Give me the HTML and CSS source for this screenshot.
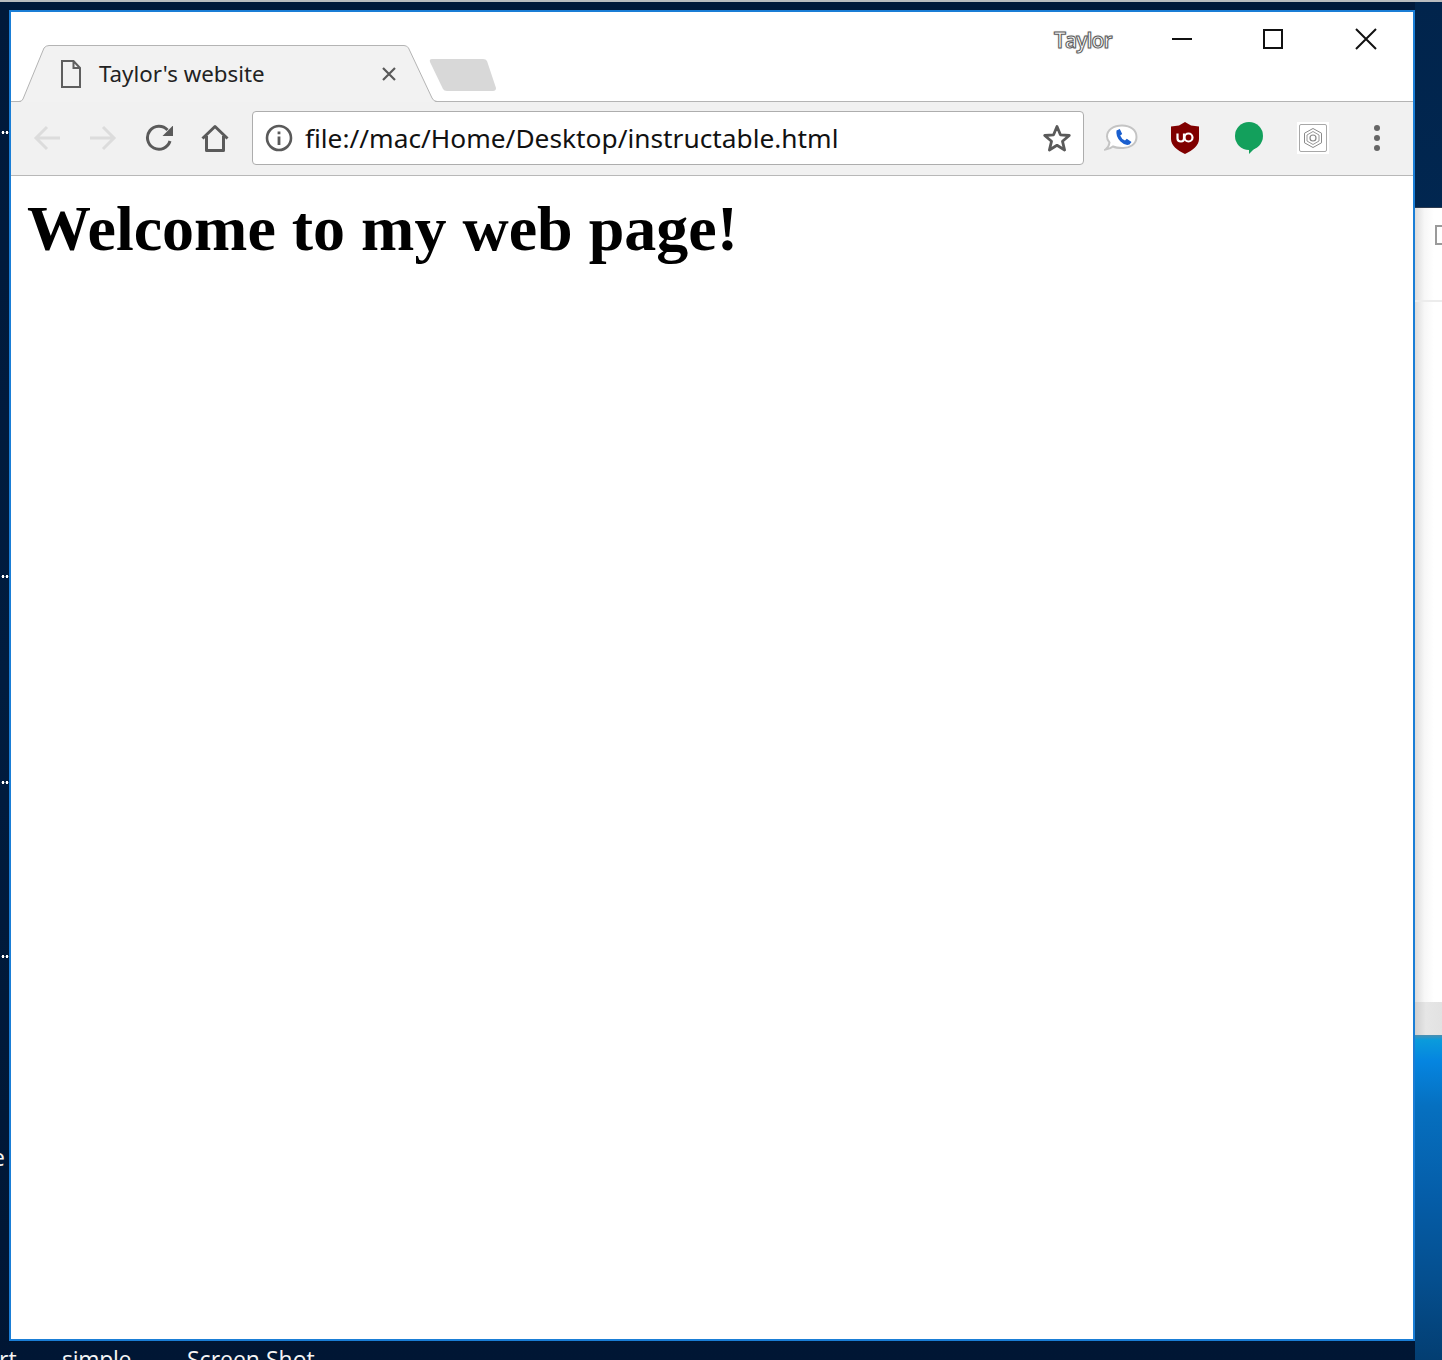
FILE: index.html
```html
<!DOCTYPE html>
<html lang="en">
<head>
<meta charset="utf-8">
<title>Taylor's website</title>
<link rel="stylesheet" href="styles.css">
</head>
<body>
<div class="desktop">
  <div class="strip"></div>
  <div class="backdrop-right">
    <div class="bg-window">
      <div class="bg-head"><span class="bg-box"></span></div>
      <div class="bg-body"></div>
      <div class="bg-foot"></div>
    </div>
    <div class="bg-wall"></div>
  </div>
  <span class="dots d1"></span>
  <span class="dots d2"></span>
  <span class="dots d3"></span>
  <span class="dots d4"></span>
  <span class="desk-label l0">e</span>
  <span class="desk-label l1">rt</span>
  <span class="desk-label l2">simple</span>
  <span class="desk-label l3">Screen Shot</span>

  <div class="window">
    <div class="titlebar">
      <svg class="tab-shape" width="500" height="90" viewBox="0 0 500 90">
        <path d="M10 89H424V90H10Z" fill="#f2f2f2"/>
        <path d="M0 89.500H8Q11 89.500 12 87L33 36Q35 33.500 38 33.500H393Q396 33.500 397.500 36L421 86Q422.500 89.500 426 89.500H430" fill="#f2f2f2" stroke="#b4b4b4" stroke-width="1"/>
        <path d="M421 47H472Q475 47 476 49L485 76Q485 79 482 79H436Q433 79 432 77L419 50Q418 47 421 47Z" fill="#d8d8d8"/>
      </svg>
      <svg class="tab-file" width="20" height="28" viewBox="0 0 20 28">
        <path d="M1 1H12.500L19 8V27H1Z M12.500 1V8H19" fill="none" stroke="#5f5f5f" stroke-width="2"/>
      </svg>
      <span class="tab-title">Taylor's website</span>
      <svg class="tab-close" width="16" height="16" viewBox="0 0 16 16">
        <path d="M2 2L14 14M14 2L2 14" stroke="#5a5a5a" stroke-width="2.200"/>
      </svg>
      <span class="profile">Taylor</span>
      <div class="win-controls">
        <svg width="22" height="22" viewBox="0 0 22 22"><path d="M1 11H21" stroke="#111" stroke-width="2"/></svg>
        <svg width="22" height="22" viewBox="0 0 22 22"><rect x="1" y="2" width="18" height="18" fill="none" stroke="#111" stroke-width="2"/></svg>
        <svg width="22" height="22" viewBox="0 0 22 22"><path d="M1 1L21 21M21 1L1 21" stroke="#111" stroke-width="2"/></svg>
      </div>
    </div>
    <div class="toolbar">
      <div class="nav">
        <svg width="28" height="26" viewBox="0 0 28 26"><path d="M27 13H3M14 2L3 13L14 24" fill="none" stroke="#dcdcdc" stroke-width="3"/></svg>
        <svg width="28" height="26" viewBox="0 0 28 26"><path d="M1 13H25M14 2L25 13L14 24" fill="none" stroke="#dcdcdc" stroke-width="3"/></svg>
        <svg width="28" height="28" viewBox="-1 0 28 28"><path d="M24 17A11.500 11.500 0 1 1 21.500 6" fill="none" stroke="#5a5a5a" stroke-width="3"/><path d="M27.500 1V12H16.500Z" fill="#5a5a5a"/></svg>
        <svg width="28" height="28" viewBox="0 0 28 28"><path d="M1.500 14.500L14 2.500L26.500 14.500M5.500 12V26.500H22.500V12" fill="none" stroke="#5a5a5a" stroke-width="3" stroke-linejoin="round"/></svg>
      </div>
      <div class="omnibox">
        <svg class="info" width="28" height="28" viewBox="0 0 28 28"><circle cx="14" cy="14" r="12" fill="none" stroke="#5a5a5a" stroke-width="2.600"/><path d="M12.600 7.500h2.800v2.800h-2.800zM12.600 12.500h2.800v8.500h-2.800z" fill="#5a5a5a"/></svg>
        <span class="url">file://mac/Home/Desktop/instructable.html</span>
        <svg class="star" width="30" height="30" viewBox="0 0 30 30"><path d="M15 3.500L18.400 11.800L27.300 12.500L20.500 18.300L22.600 27L15 22.300L7.400 27L9.500 18.300L2.700 12.500L11.600 11.800Z" fill="none" stroke="#5a5a5a" stroke-width="2.800" stroke-linejoin="round"/></svg>
      </div>
      <div class="extensions">
        <svg width="34" height="30" viewBox="0 0 34 30"><path d="M18 2.500C27 2.500 32.500 7.500 32.500 14C32.500 21 26 25.500 18 25C14 25 11 24.500 9 23.500Q6 26 1.500 26.500Q5 24 5.500 19.500C3.500 17.500 3 15.500 3 13.500C3 7 9.500 2.500 18 2.500Z" fill="#fff" stroke="#c4c4c4" stroke-width="2"/><path d="M12.500 7.500L15.800 6L18.200 11L16.200 12.500Q17.500 16 21 17.500L22.800 15.800L27.500 19L25.500 21.500Q21 23 16.500 18.500Q11.500 13.500 12.500 7.500Z" fill="#1a5fcf"/></svg>
        <svg width="30" height="34" viewBox="0 0 30 34"><path d="M15 1L21 4.500L29 5.500V18C29 24 23 29.500 15 33C7 29.500 1 24 1 18V5.500L9 4.500Z" fill="#800000"/><path d="M7.500 12.500V17.500Q7.500 20.500 11 20.500Q14 20.500 14 17.500V12.500" fill="none" stroke="#fff" stroke-width="2.200"/><circle cx="18.500" cy="16.500" r="4" fill="none" stroke="#fff" stroke-width="2.200"/></svg>
        <svg width="30" height="34" viewBox="0 0 30 34"><circle cx="15" cy="15" r="14" fill="#13a05c"/><path d="M15 28V33L22 26Z" fill="#13a05c"/></svg>
        <svg width="32" height="32" viewBox="0 0 32 32"><rect width="32" height="32" fill="#fff"/><rect x="2.500" y="2.500" width="27" height="27" rx="1.500" fill="none" stroke="#a8a8a8" stroke-width="1"/><path d="M16 6.500L24.500 11.200V20.800L16 25.500L7.500 20.800V11.200Z" fill="none" stroke="#8a8a8a" stroke-width="1"/><path d="M16 9.500L22 13V19L16 22.500L10 19V13Z" fill="none" stroke="#9a9a9a" stroke-width="1"/><circle cx="16" cy="16" r="3" fill="none" stroke="#888" stroke-width="1.200"/></svg>
      </div>
      <div class="menu-dots"><i></i><i></i><i></i></div>
    </div>
    <div class="page">
      <h1 class="headline">Welcome to my web page!</h1>
    </div>
  </div>
</div>
</body>
</html>
```

FILE: styles.css
```css
* { box-sizing: border-box; }
html, body { margin: 0; padding: 0; }
body { width: 1442px; height: 1360px; overflow: hidden; }

.desktop {
  position: relative;
  width: 1442px;
  height: 1360px;
  overflow: hidden;
  background: linear-gradient(180deg, #00193a 0%, #001c3f 50%, #001634 100%);
}
.strip { position: absolute; left: 0; top: 0; width: 100%; height: 2px; background: #b9bcbf; }

.backdrop-right {
  position: absolute;
  left: 1415px;
  top: 2px;
  width: 27px;
  height: 1358px;
  display: flex;
  flex-direction: column;
  background: linear-gradient(180deg, #01244c 0%, #023567 100%);
}
.bg-window {
  margin-top: 205px;
  height: 828px;
  display: flex;
  flex-direction: column;
  background: linear-gradient(90deg, #dcdcdc 0%, #f7f7f7 35%, #fff 70%);
  border-top: 1px solid #2c3b50;
}
.bg-head { height: 94px; padding: 17px 0 0 20px; border-bottom: 2px solid #ececec; }
.bg-box { display: block; width: 10px; height: 20px; border: 2px solid #9a9a9a; border-right: 0; }
.bg-body { height: 700px; }
.bg-foot { height: 33px; background: linear-gradient(90deg, #cfcfcf 0%, #e6e6e6 40%, #e2e2e2 100%); }
.bg-wall {
  flex: 1;
  background: linear-gradient(180deg, #4d8fb0 0%, #0a9bdc 1.500%, #0585e0 8%, #0670c0 22%, #055da8 50%, #054f8f 75%, #033e72 100%);
}

.dots { position: absolute; left: 1px; width: 8px; height: 3px; background: radial-gradient(circle, #fff 1.300px, transparent 1.600px) 0 0 / 4px 3px repeat-x; }
.d1 { top: 131px; }
.d2 { top: 575px; }
.d3 { top: 781px; }
.d4 { top: 955px; }

.desk-label { position: absolute; color: #f4f4f4; font: 23px/28px "Open Sans", "Noto Sans", sans-serif; white-space: nowrap; }
.l0 { left: -8px; top: 1143px; }
.l1 { left: -1px; top: 1345px; }
.l2 { left: 62px; top: 1345px; letter-spacing: -0.300px; }
.l3 { left: 187px; top: 1345px; }

.window {
  position: absolute;
  left: 9px;
  top: 10px;
  width: 1406px;
  height: 1331px;
  border: 2px solid #1a7ed6;
  display: flex;
  flex-direction: column;
  background: #fff;
}

.titlebar { position: relative; height: 90px; background: #fff; border-bottom: 1px solid #b4b4b4; }
.tab-shape { position: absolute; left: 0; top: 0; }
.tab-file { position: absolute; left: 50px; top: 48px; }
.tab-title { position: absolute; left: 88px; top: 46px; font: 22.300px/32px "Noto Sans", "Open Sans", sans-serif; color: #222; white-space: nowrap; }
.tab-close { position: absolute; left: 370px; top: 54px; }
.profile {
  position: absolute;
  left: 1043px;
  top: 13px;
  font: 600 21px/30px "Open Sans", sans-serif;
  letter-spacing: -0.900px;
  color: #fff;
  -webkit-text-stroke: 1px #5c5c5c;
  text-shadow: 0 0 2px #999;
  white-space: nowrap;
}
.win-controls { position: absolute; left: 1160px; top: 16px; display: flex; gap: 70px; }

.toolbar {
  height: 74px;
  padding-bottom: 1px;
  background: #f1f1f1;
  border-bottom: 1px solid #b8b8b8;
  display: flex;
  align-items: center;
  position: relative;
}
.nav { display: flex; align-items: center; gap: 28px; margin-left: 22px; width: 219px; }
.omnibox {
  width: 832px;
  height: 54px;
  background: #fff;
  border: 1px solid #adadad;
  border-radius: 4px;
  display: flex;
  align-items: center;
  padding-left: 12px;
  padding-right: 11px;
}
.info { flex: none; }
.url { flex: 1; margin-left: 12px; font: 26.300px/36px "Noto Sans", "Open Sans", sans-serif; color: #111; white-space: nowrap; }
.star { flex: none; }
.extensions { display: grid; grid-template-columns: repeat(4, 64px); align-items: center; justify-items: center; margin-left: 5px; }
.menu-dots { position: absolute; left: 1363px; top: 23px; display: flex; flex-direction: column; gap: 4px; }
.menu-dots i { display: block; width: 6px; height: 6px; border-radius: 50%; background: #666; }

.page { flex: 1; background: #fff; padding: 16px; }
.headline { margin: 0; font: bold 64px/74px "Liberation Serif", serif; color: #000; white-space: nowrap; }
```
